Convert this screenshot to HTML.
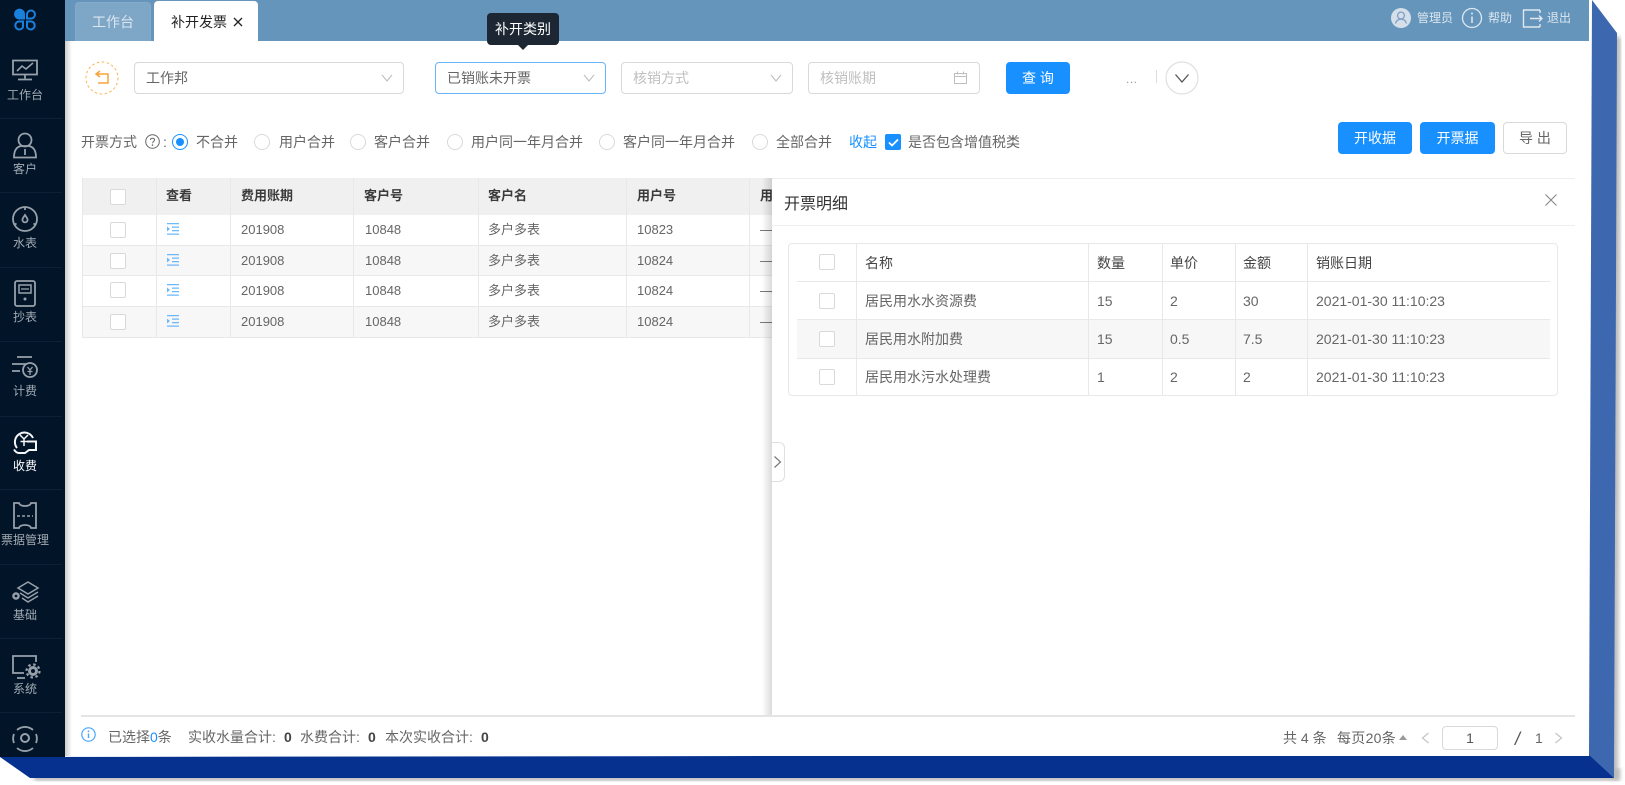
<!DOCTYPE html>
<html lang="zh"><head><meta charset="utf-8"><title>补开发票</title>
<style>
*{box-sizing:border-box}
html,body{margin:0;padding:0;background:#fff}
body{position:relative;width:1625px;height:785px;overflow:hidden;font:14px/20px "Liberation Sans","Noto Sans CJK SC",sans-serif;color:#666}
.a,.t{position:absolute}
.t{white-space:nowrap}
.side{position:absolute;left:0;top:0;width:65px;height:757px;background:#011428}
.lb{position:absolute;left:0;width:50px;text-align:center;font-size:12px;line-height:16px;color:#a3abb3;white-space:nowrap}
.sep{position:absolute;left:0;width:62px;height:1px;background:#0c2036}
.ic{position:absolute;left:9px;width:32px;height:32px;fill:none;stroke:#98a1aa;stroke-width:1.6}
.sel{position:absolute;top:62px;height:32px;border:1px solid #d9d9d9;border-radius:4px;background:#fff;padding:5px 11px;color:#666}
.ph{color:#bfbfbf}
.chev{position:absolute;top:11px;right:10px;width:12px;height:8px;fill:none;stroke:#bfbfbf;stroke-width:1.1}
.r{position:absolute;top:134px;width:16px;height:16px;border:1px solid #d9d9d9;border-radius:50%;background:#fff}
.l{position:absolute;top:132px;white-space:nowrap;color:#666}
.btn{position:absolute;height:32px;border-radius:4px;background:#1890ff;color:#fff;text-align:center;line-height:32px}
.cb{position:absolute;width:16px;height:16px;border:1px solid #d9d9d9;border-radius:2px;background:#fff}
.hl{position:absolute;background:#e8e8e8}
.d13{position:absolute;font-size:13px;line-height:18px;white-space:nowrap;color:#666}
.h13{position:absolute;font-size:13px;line-height:18px;white-space:nowrap;color:#3a3a3a;font-weight:bold}
.d14{position:absolute;font-size:14px;line-height:20px;white-space:nowrap;color:#666}
</style></head><body>

<!-- frame -->
<svg class="a" style="left:0;top:0" width="1625" height="785">
<defs><filter id="s" x="-2%" y="-2%" width="104%" height="104%"><feGaussianBlur stdDeviation="2"/></filter></defs>
<polygon points="34,768 1620,768 1620,781 34,781" fill="#bbb" filter="url(#s)"/>
<polygon points="1600,30 1621,38 1618,780 1600,770" fill="#bbb" filter="url(#s)"/>
<polygon points="1592,0 1617,33 1614,778 1589,756" fill="#3d68b0"/>
<polygon points="0,757 1589,755 1614,778 30,778" fill="#06318f"/>
</svg>

<!-- main -->
<div class="a" style="left:65px;top:0;width:1524px;height:756px;background:#fff"></div>
<div class="a" style="left:65px;top:41px;width:7px;height:715px;background:linear-gradient(90deg,#ccc,#fff)"></div>
<div class="a" style="left:65px;top:0;width:1524px;height:41px;background:#6595bb"></div>

<!-- tabs -->
<div class="a" style="left:75px;top:2px;width:76px;height:39px;background:#7ea6c7;border-radius:4px 4px 0 0;border:1px solid #86abca;border-bottom:0"></div>
<div class="t" style="left:92px;top:12px;color:#dbe6ef">工作台</div>
<div class="a" style="left:154px;top:1px;width:104px;height:40px;background:#fff;border-radius:4px 4px 0 0"></div>
<div class="t" style="left:171px;top:12px;color:#222">补开发票</div>
<svg class="a" style="left:233px;top:17px" width="10" height="10"><path d="M1 1L9 9M9 1L1 9" stroke="#222" stroke-width="1.300" fill="none"/></svg>

<!-- top right -->
<svg class="a" style="left:1390px;top:7px" width="184" height="22" fill="none">
<circle cx="11" cy="11" r="10" fill="#d5dfea"/><circle cx="11" cy="8.500" r="3.400" stroke="#7f9fc4" stroke-width="1.300"/><path d="M5.500 16.500c.8-3 2.600-4.300 5.500-4.300s4.700 1.300 5.500 4.300" stroke="#7f9fc4" stroke-width="1.300"/>
<circle cx="82" cy="11" r="9.500" stroke="#dfe8f0" stroke-width="1.300"/><path d="M82 9.500V16" stroke="#dfe8f0" stroke-width="1.500"/><circle cx="82" cy="6.500" r="1" fill="#dfe8f0"/>
<path d="M150 3h-16.500v17h16.500M150 3v3M150 17v3M140 11.500h12M149 8.500l3 3-3 3" stroke="#dfe8f0" stroke-width="1.400"/>
</svg>
<div class="t" style="left:1417px;top:8px;font-size:12px;color:#dbe6ef">管理员</div>
<div class="t" style="left:1488px;top:8px;font-size:12px;color:#dbe6ef">帮助</div>
<div class="t" style="left:1547px;top:8px;font-size:12px;color:#dbe6ef">退出</div>

<!-- sidebar -->
<div class="side"></div>
<svg class="a" style="left:12px;top:8px" width="26" height="26" fill="none" stroke="#1a80de" stroke-width="2">
<path d="M12 10.500H6.500A4.500 4.500 0 1 1 12 5.500Z" fill="#1a80de"/>
<path d="M15 10.500V6a4 4 0 1 1 4.500 4.500Z"/>
<path d="M11 13.500V19a4 4 0 1 1-4.500-5.500Z"/>
<path d="M15 13.500h4.500a4 4 0 1 1-4.500 5.500Z"/>
</svg>

<svg class="ic" style="top:58px" viewBox="0 0 32 32"><path d="M4 2.500h24v14H4z" stroke-width="1.800"/><path d="M8 13l5-5 4 3 7-6" stroke-width="1.600"/><path d="M16 16.500v4M9 21.500h14" stroke-width="1.800"/></svg>
<div class="lb" style="top:87px">工作台</div><div class="sep" style="top:118px"></div>
<svg class="ic" style="top:131px" viewBox="0 0 32 32"><circle cx="16" cy="9" r="6.500" stroke-width="1.800"/><path d="M5 26.500c0-8 3.500-11 7.500-11.500h7c4 .5 7.500 3.500 7.500 11.500z" stroke-width="1.800"/><path d="M16 18v6" stroke-width="1.800"/></svg>
<div class="lb" style="top:161px">客户</div><div class="sep" style="top:192px"></div>
<svg class="ic" style="top:203px" viewBox="0 0 32 32"><circle cx="16" cy="16" r="12" stroke-width="1.800"/><path d="M16 4v3M5 22l2.500-1.500M27 22l-2.500-1.500" stroke-width="1.800"/><path d="M16 12c-1.600 2.400-2.600 3.400-2.600 4.800a2.600 2.600 0 0 0 5.200 0c0-1.400-1-2.400-2.600-4.800z" stroke-width="1.800"/></svg>
<div class="lb" style="top:235px">水表</div><div class="sep" style="top:267px"></div>
<svg class="ic" style="top:278px" viewBox="0 0 32 32"><rect x="6" y="3" width="20" height="25" rx="2" stroke-width="1.800"/><rect x="10" y="7" width="12" height="8" stroke-width="1.500"/><path d="M12 11h8" stroke-width="1.300"/><circle cx="16" cy="21" r="1.500" fill="#98a1aa" stroke="none"/></svg>
<div class="lb" style="top:309px">抄表</div><div class="sep" style="top:341px"></div>
<svg class="ic" style="top:352px" viewBox="0 0 32 32"><path d="M8 5h15M3 12h14M3 19h8" stroke-width="1.800"/><circle cx="21" cy="18" r="7" stroke-width="1.800"/><path d="M18.500 15l2.500 3 2.500-3M21 18v5M18.500 19.500h5" stroke-width="1.300"/></svg>
<div class="lb" style="top:383px">计费</div><div class="sep" style="top:416px"></div>
<svg class="ic" style="top:429px;stroke:#f4f6f8" viewBox="0 0 32 32"><path d="M8 19A9.500 9.500 0 1 1 24 9" stroke-width="2"/><path d="M11 6l4 4 4-4M15 10v7M11.500 12.500h7" stroke-width="1.500"/><path d="M18 12.500h9v8.500h-7l-4 3H10c-2 0-3.500-1-5-3.500" stroke-width="2"/></svg>
<div class="lb" style="top:458px;color:#fff">收费</div><div class="sep" style="top:489px"></div>
<svg class="ic" style="top:500px" viewBox="0 0 32 32"><path d="M5 3h5c1 4 11 4 12 0h5v25h-5c-1-4-11-4-12 0H5z" stroke-width="1.800"/><path d="M8 16h16" stroke-width="1.500" stroke-dasharray="3 2"/></svg>
<div class="lb" style="top:532px">票据管理</div><div class="sep" style="top:564px"></div>
<svg class="ic" style="top:577px" viewBox="0 0 32 32"><path d="M19 5l10 6-10 6-10-6z" stroke-width="1.500"/><path d="M11 16l8 5 10-6M13 21l6 4 10-6" stroke-width="1.500"/><circle cx="7" cy="19" r="2.600" stroke-width="2.400"/></svg>
<div class="lb" style="top:607px">基础</div><div class="sep" style="top:638px"></div>
<svg class="ic" style="top:651px" viewBox="0 0 32 32"><path d="M27 11V5H4v17h11M8 27h8" stroke-width="1.800"/><circle cx="24" cy="20" r="3.500" stroke-width="3"/><circle cx="24" cy="20" r="6.500" stroke-width="2.200" stroke-dasharray="2.500 2.600"/></svg>
<div class="lb" style="top:681px">系统</div><div class="sep" style="top:712px"></div>
<svg class="ic" style="top:722px" viewBox="0 0 32 32"><path d="M8 8A12 12 0 0 1 24 8M27 12a12 12 0 0 1 0 9M24 26a12 12 0 0 1-16 0M5 21a12 12 0 0 1 0-9" stroke-width="1.800"/><circle cx="16" cy="16" r="4" stroke-width="2"/></svg>

<!-- filter row -->
<svg class="a" style="left:85px;top:61px" width="34" height="34" fill="none">
<circle cx="17" cy="17" r="16" stroke="#fbb24f" stroke-width="1" stroke-dasharray="2.500 2.500"/>
<path d="M12 13h11v9H13M15 10l-4 3 4 3" stroke="#f9a33a" stroke-width="1.500"/>
</svg>
<div class="sel" style="left:134px;width:270px">工作邦<svg class="chev" viewBox="0 0 12 8"><path d="M1 1l5 6 5-6"/></svg></div>
<div class="sel" style="left:435px;width:171px;border-color:#69b4fb">已销账未开票<svg class="chev" viewBox="0 0 12 8"><path d="M1 1l5 6 5-6"/></svg></div>
<div class="sel ph" style="left:621px;width:172px">核销方式<svg class="chev" viewBox="0 0 12 8"><path d="M1 1l5 6 5-6"/></svg></div>
<div class="sel ph" style="left:808px;width:172px">核销账期
<svg class="a" style="right:12px;top:8px" width="13" height="13" fill="none" stroke="#bfbfbf"><path d="M.5 2.500h12v10H.5zM.5 5.500h12M3.500.5v3M9.500.5v3"/></svg></div>
<div class="btn" style="left:1006px;top:62px;width:64px">查 询</div>
<div class="t" style="left:1126px;top:69px;font-size:12px;color:#999;letter-spacing:.5px">...</div>
<div class="a" style="left:1156px;top:70px;width:1px;height:13px;background:#ddd"></div>
<svg class="a" style="left:1165px;top:61px" width="34" height="34" fill="none"><circle cx="17" cy="17" r="16" stroke="#e0e0e0" stroke-width="1.200"/><path d="M10.500 13.500l6.500 7.500 6.500-7.500" stroke="#555" stroke-width="1.300"/></svg>

<!-- tooltip -->
<div class="a" style="left:487px;top:13px;width:72px;height:32px;background:#1d2733;border-radius:4px;color:#fff;text-align:center;line-height:32px">补开类别</div>
<div class="a" style="left:518px;top:45px;border:5px solid transparent;border-top-color:#1d2733;border-bottom:0"></div>

<!-- radio row -->
<div class="l" style="left:81px">开票方式</div>
<svg class="a" style="left:145px;top:134px" width="15" height="15" fill="none"><circle cx="7.500" cy="7.500" r="6.800" stroke="#666"/><path d="M5.500 6C5.500 3.700 9.500 3.700 9.500 6 9.500 7.500 7.500 7.500 7.500 9.300" stroke="#666"/><circle cx="7.500" cy="11.100" r=".8" fill="#666"/></svg>
<div class="l" style="left:163px">:</div>
<div class="r" style="left:172px;border-color:#1890ff"><div class="a" style="left:3px;top:3px;width:8px;height:8px;border-radius:50%;background:#1890ff"></div></div><div class="l" style="left:196px">不合并</div>
<div class="r" style="left:254px"></div><div class="l" style="left:279px">用户合并</div>
<div class="r" style="left:350px"></div><div class="l" style="left:374px">客户合并</div>
<div class="r" style="left:447px"></div><div class="l" style="left:471px">用户同一年月合并</div>
<div class="r" style="left:599px"></div><div class="l" style="left:623px">客户同一年月合并</div>
<div class="r" style="left:752px"></div><div class="l" style="left:776px">全部合并</div>
<div class="l" style="left:849px;color:#1890ff">收起</div>
<div class="cb" style="left:885px;top:134px;background:#1890ff;border-color:#1890ff"><svg class="a" style="left:2px;top:3px" width="11" height="9" fill="none"><path d="M1 4.500l3 3 6-6" stroke="#fff" stroke-width="1.800"/></svg></div>
<div class="l" style="left:908px">是否包含增值税类</div>

<div class="btn" style="left:1338px;top:122px;width:74px">开收据</div>
<div class="btn" style="left:1420px;top:122px;width:75px">开票据</div>
<div class="btn" style="left:1503px;top:122px;width:64px;background:#fff;border:1px solid #d9d9d9;color:#666;line-height:30px">导 出</div>

<!-- main table -->
<div class="a" style="left:82px;top:178px;width:700px;height:37px;background:#f0f0f0"></div>
<div class="a" style="left:82px;top:245px;width:700px;height:31px;background:#f7f7f7"></div>
<div class="a" style="left:82px;top:306px;width:700px;height:31px;background:#f7f7f7"></div>
<div class="hl" style="left:82px;top:245px;width:700px;height:1px"></div>
<div class="hl" style="left:82px;top:275px;width:700px;height:1px"></div>
<div class="hl" style="left:82px;top:306px;width:700px;height:1px"></div>
<div class="hl" style="left:82px;top:337px;width:700px;height:1px"></div>
<div class="hl" style="left:82px;top:178px;width:1px;height:160px"></div>
<div class="hl" style="left:156px;top:178px;width:1px;height:160px"></div>
<div class="hl" style="left:230px;top:178px;width:1px;height:160px"></div>
<div class="hl" style="left:353px;top:178px;width:1px;height:160px"></div>
<div class="hl" style="left:478px;top:178px;width:1px;height:160px"></div>
<div class="hl" style="left:626px;top:178px;width:1px;height:160px"></div>
<div class="hl" style="left:749px;top:178px;width:1px;height:160px"></div>

<div class="cb" style="left:110px;top:189px"></div>
<div class="h13" style="left:166px;top:187px">查看</div><div class="h13" style="left:241px;top:187px">费用账期</div><div class="h13" style="left:364px;top:187px">客户号</div><div class="h13" style="left:488px;top:187px">客户名</div><div class="h13" style="left:637px;top:187px">用户号</div><div class="h13" style="left:760px;top:187px">用户</div>

<div class="cb" style="left:110px;top:222px"></div><div class="d13" style="left:241px;top:221px">201908</div><div class="d13" style="left:365px;top:221px">10848</div><div class="d13" style="left:488px;top:221px">多户多表</div><div class="d13" style="left:637px;top:221px">10823</div><div class="d13" style="left:760px;top:221px">—</div>
<div class="cb" style="left:110px;top:253px"></div><div class="d13" style="left:241px;top:252px">201908</div><div class="d13" style="left:365px;top:252px">10848</div><div class="d13" style="left:488px;top:252px">多户多表</div><div class="d13" style="left:637px;top:252px">10824</div><div class="d13" style="left:760px;top:252px">—</div>
<div class="cb" style="left:110px;top:282px"></div><div class="d13" style="left:241px;top:282px">201908</div><div class="d13" style="left:365px;top:282px">10848</div><div class="d13" style="left:488px;top:282px">多户多表</div><div class="d13" style="left:637px;top:282px">10824</div><div class="d13" style="left:760px;top:282px">—</div>
<div class="cb" style="left:110px;top:314px"></div><div class="d13" style="left:241px;top:313px">201908</div><div class="d13" style="left:365px;top:313px">10848</div><div class="d13" style="left:488px;top:313px">多户多表</div><div class="d13" style="left:637px;top:313px">10824</div><div class="d13" style="left:760px;top:313px">—</div>

<svg class="a" style="left:167px;top:223px" width="12" height="12" fill="#6bb8fc"><path d="M0 0h12v1.300H0zM5 3.500h7v1.300H5zM5 7h7v1.300H5zM0 10.500h12v1.300H0zM0 3.500l3 2.500-3 2.500z"/></svg>
<svg class="a" style="left:167px;top:254px" width="12" height="12" fill="#6bb8fc"><path d="M0 0h12v1.300H0zM5 3.500h7v1.300H5zM5 7h7v1.300H5zM0 10.500h12v1.300H0zM0 3.500l3 2.500-3 2.500z"/></svg>
<svg class="a" style="left:167px;top:284px" width="12" height="12" fill="#6bb8fc"><path d="M0 0h12v1.300H0zM5 3.500h7v1.300H5zM5 7h7v1.300H5zM0 10.500h12v1.300H0zM0 3.500l3 2.500-3 2.500z"/></svg>
<svg class="a" style="left:167px;top:315px" width="12" height="12" fill="#6bb8fc"><path d="M0 0h12v1.300H0zM5 3.500h7v1.300H5zM5 7h7v1.300H5zM0 10.500h12v1.300H0zM0 3.500l3 2.500-3 2.500z"/></svg>

<!-- drawer -->
<div class="a" style="left:762px;top:178px;width:10px;height:538px;background:linear-gradient(90deg,rgba(0,0,0,0),rgba(0,0,0,.14))"></div>
<div class="a" style="left:772px;top:178px;width:803px;height:538px;background:#fff;border-top:1px solid #eee"></div>
<div class="t" style="left:784px;top:193px;font-size:16px;line-height:24px;color:#333">开票明细</div>
<svg class="a" style="left:1545px;top:194px" width="12" height="12" fill="none"><path d="M.5.500l11 11M11.500.5l-11 11" stroke="#888" stroke-width="1.100"/></svg>
<div class="a" style="left:772px;top:225px;width:803px;height:1px;background:#eee"></div>

<div class="a" style="left:788px;top:243px;width:770px;height:153px;border:1px solid #e8e8e8;border-radius:4px"></div>
<div class="a" style="left:797px;top:319px;width:753px;height:39px;background:#f7f7f7"></div>
<div class="hl" style="left:797px;top:281px;width:753px;height:1px"></div>
<div class="hl" style="left:797px;top:319px;width:753px;height:1px"></div>
<div class="hl" style="left:797px;top:358px;width:753px;height:1px"></div>
<div class="hl" style="left:856px;top:243px;width:1px;height:153px"></div>
<div class="hl" style="left:1088px;top:243px;width:1px;height:153px"></div>
<div class="hl" style="left:1162px;top:243px;width:1px;height:153px"></div>
<div class="hl" style="left:1235px;top:243px;width:1px;height:153px"></div>
<div class="hl" style="left:1307px;top:243px;width:1px;height:153px"></div>

<div class="cb" style="left:819px;top:254px"></div><div class="cb" style="left:819px;top:293px"></div><div class="cb" style="left:819px;top:331px"></div><div class="cb" style="left:819px;top:369px"></div>

<div class="d14" style="left:865px;top:253px;color:#444">名称</div><div class="d14" style="left:1097px;top:253px;color:#444">数量</div><div class="d14" style="left:1170px;top:253px;color:#444">单价</div><div class="d14" style="left:1243px;top:253px;color:#444">金额</div><div class="d14" style="left:1316px;top:253px;color:#444">销账日期</div>
<div class="d14" style="left:865px;top:291px">居民用水水资源费</div><div class="d14" style="left:1097px;top:291px">15</div><div class="d14" style="left:1170px;top:291px">2</div><div class="d14" style="left:1243px;top:291px">30</div><div class="d14" style="left:1316px;top:291px">2021-01-30 11:10:23</div>
<div class="d14" style="left:865px;top:329px">居民用水附加费</div><div class="d14" style="left:1097px;top:329px">15</div><div class="d14" style="left:1170px;top:329px">0.5</div><div class="d14" style="left:1243px;top:329px">7.5</div><div class="d14" style="left:1316px;top:329px">2021-01-30 11:10:23</div>
<div class="d14" style="left:865px;top:367px">居民用水污水处理费</div><div class="d14" style="left:1097px;top:367px">1</div><div class="d14" style="left:1170px;top:367px">2</div><div class="d14" style="left:1243px;top:367px">2</div><div class="d14" style="left:1316px;top:367px">2021-01-30 11:10:23</div>

<div class="a" style="left:772px;top:442px;width:13px;height:40px;background:#fff;border:1px solid #e0e0e0;border-left:0;border-radius:0 6px 6px 0"></div>
<svg class="a" style="left:773px;top:455px" width="10" height="14" fill="none"><path d="M1.500 1.500l6 5.500-6 5.500" stroke="#777" stroke-width="1.200"/></svg>

<!-- footer -->
<div class="a" style="left:81px;top:715px;width:1494px;height:2px;background:#e4e4e4"></div>
<svg class="a" style="left:81px;top:727px" width="15" height="15" fill="none"><circle cx="7.500" cy="7.500" r="6.700" stroke="#4ba6fb" stroke-width="1.200"/><path d="M7.500 6.500v4.500" stroke="#4ba6fb" stroke-width="1.400"/><circle cx="7.500" cy="4.300" r=".9" fill="#4ba6fb"/></svg>
<div class="t" style="left:108px;top:727px">已选择<span style="color:#1890ff">0</span>条</div>
<div class="t" style="left:188px;top:727px">实收水量合计:</div><div class="t" style="left:284px;top:727px;color:#444;font-weight:bold">0</div>
<div class="t" style="left:300px;top:727px">水费合计:</div><div class="t" style="left:368px;top:727px;color:#444;font-weight:bold">0</div>
<div class="t" style="left:385px;top:727px">本次实收合计:</div><div class="t" style="left:481px;top:727px;color:#444;font-weight:bold">0</div>

<div class="t" style="left:1283px;top:728px">共 4 条</div>
<div class="t" style="left:1337px;top:728px;letter-spacing:.3px">每页20条</div>
<div class="a" style="left:1399px;top:735px;border:4px solid transparent;border-bottom:5px solid #999;border-top:0"></div>
<svg class="a" style="left:1421px;top:732px" width="9" height="12" fill="none"><path d="M7.500 1L1.500 6l6 5" stroke="#c4c4c4" stroke-width="1.200"/></svg>
<div class="a" style="left:1442px;top:726px;width:56px;height:24px;border:1px solid #d9d9d9;border-radius:4px;text-align:center;line-height:22px;color:#555">1</div>
<div class="t" style="left:1515px;top:729px;color:#555;font-size:18px;font-style:italic">/</div>
<div class="t" style="left:1535px;top:728px">1</div>
<svg class="a" style="left:1554px;top:732px" width="9" height="12" fill="none"><path d="M1.500 1l6 5-6 5" stroke="#c4c4c4" stroke-width="1.200"/></svg>
</body></html>
